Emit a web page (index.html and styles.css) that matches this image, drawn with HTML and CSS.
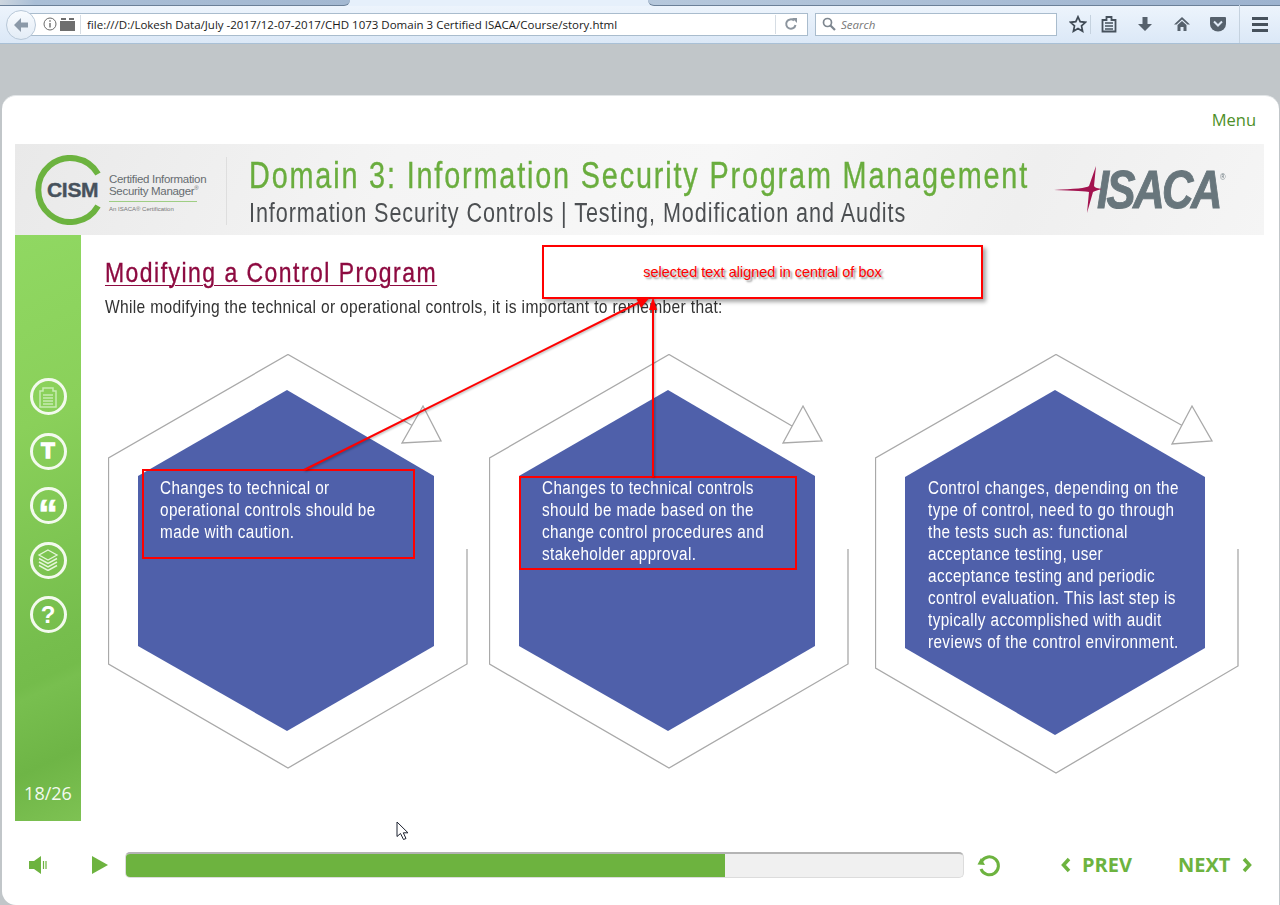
FILE: index.html
```html
<!DOCTYPE html>
<html lang="en">
<head>
<meta charset="utf-8">
<title>Modifying a Control Program</title>
<link rel="stylesheet" href="styles.css">
</head>
<body>
<header class="browser">
  <div class="tabs"><div class="tab tab-left"></div><div class="tab tab-right"></div></div>
  <div class="toolbar">
    <div class="back"><svg width="20" height="20" viewBox="0 0 20 20"><path d="M10 3 3 10l7 7v-4.500h7v-5h-7z" fill="#8b99a8"/></svg></div>
    <div class="urlbar">
      <svg class="u-info" width="14" height="14" viewBox="0 0 14 14"><circle cx="7" cy="7" r="6" fill="none" stroke="#6b6b6b"/><path d="M6.300 6h1.400v4.500H6.300zM6.300 3.300h1.400v1.400H6.300z" fill="#6b6b6b"/></svg>
      <svg class="u-folder" width="15" height="13" viewBox="0 0 15 13"><path d="M0 3h15v10H0zM1 0h5v2H1zM9 0h5v2H9z" fill="#6e6e6e"/></svg>
      <span class="u-sep"></span>
      <span class="url">file:///D:/Lokesh Data/July -2017/12-07-2017/CHD 1073 Domain 3 Certified ISACA/Course/story.html</span>
      <span class="u-sep u-sep-r"></span>
      <svg class="u-reload" width="14" height="14" viewBox="0 0 14 14"><path d="M11.500 8A4.700 4.700 0 1 1 10 3.500" fill="none" stroke="#8c959e" stroke-width="2"/><path d="M8 1h5v5z" fill="#8c959e"/></svg>
    </div>
    <div class="searchbar">
      <svg width="14" height="14" viewBox="0 0 14 14"><circle cx="5.500" cy="5.500" r="4" fill="none" stroke="#7d868f" stroke-width="1.700"/><path d="m8.500 8.500 4.500 4.500" stroke="#7d868f" stroke-width="2.200"/></svg>
      <span>Search</span>
    </div>
    <div class="tools">
      <svg class="i-star" width="18" height="18" viewBox="0 0 18 18"><path d="M9 1.800 11.200 6.700l5.300.6-4 3.600 1.100 5.300L9 13.500l-4.600 2.700 1.100-5.300-4-3.600 5.300-.6z" fill="none" stroke="#3f4a55" stroke-width="1.700"/></svg>
      <span class="t-sep"></span>
      <svg class="i-list" width="16" height="18" viewBox="0 0 16 18"><path d="M1.500 5h4V2h5v3h4v11.500h-13z" fill="none" stroke="#46515c" stroke-width="1.800"/><path d="M4 8h8M4 11h8M4 14h8" stroke="#46515c" stroke-width="1.600"/></svg>
      <svg class="i-down" width="16" height="18" viewBox="0 0 16 18"><path d="M5.500 2h5v7H15l-7 7-7-7h4.500z" fill="#56616c"/></svg>
      <svg class="i-home" width="18" height="18" viewBox="0 0 18 18"><path d="M9 2 1 9.500h2.500L9 4.500l5.500 5H17zM4.500 10 9 6l4.500 4v6h-3v-4h-3v4h-3z" fill="#56616c"/></svg>
      <svg class="i-pocket" width="18" height="18" viewBox="0 0 18 18"><path d="M2 2h14a1 1 0 0 1 1 1v6a8 7.500 0 0 1-16 0V3a1 1 0 0 1 1-1z" fill="#56616c"/><path d="m5 6.500 4 4 4-4" fill="none" stroke="#dfe9f5" stroke-width="2"/></svg>
      <span class="t-sep t-sep-menu"></span>
      <div class="burger"><i></i><i></i><i></i></div>
    </div>
  </div>
</header>

<main class="card">
  <div class="menu-row"><span class="menu-link">Menu</span></div>

  <section class="banner">
    <div class="cism">
      <div class="ring">
        <svg width="70" height="70" viewBox="0 0 70 70"><path d="M65 19A32 32 0 1 0 65 51" fill="none" stroke="#6cb33f" stroke-width="6"/></svg>
        <span>CISM</span>
      </div>
      <div class="cism-text">
        <div class="cism-name">Certified Information<br>Security Manager<sup>®</sup></div>
        <div class="cism-sub">An ISACA® Certification</div>
      </div>
    </div>
    <div class="titles">
      <h1>Domain 3: Information Security Program Management</h1>
      <p>Information Security Controls | Testing, Modification and Audits</p>
    </div>
    <div class="isaca">
      <svg width="48" height="48" viewBox="0 0 48 48"><path d="M0 24C20 23 33 22 35 20L42 0 40 20C41 22 44 22 48 23 44 24 41 25 39 26L33 47 35 26C33 25 20 25 0 24z" fill="#a3134f"/></svg>
      <span class="isaca-word">ISACA<sup>®</sup></span>
    </div>
  </section>

  <section class="body-row">
    <nav class="side">
      <div class="side-icons">
        <div class="ring-btn"><svg width="20" height="22" viewBox="0 0 20 22"><path d="M2 5h3V2h10v3h3v16H2z" fill="none" stroke="#c8ecb2" stroke-width="1.500"/><path d="M5 9h10M5 12h10M5 15h10M5 18h10" stroke="#c8ecb2" stroke-width="1.500"/></svg></div>
        <div class="ring-btn"><span class="glyph-t">T</span></div>
        <div class="ring-btn"><span class="glyph-q">“</span></div>
        <div class="ring-btn"><svg width="22" height="22" viewBox="0 0 22 22"><path d="M11 1 20 6l-9 5-9-5z" fill="none" stroke="#e4f6d9" stroke-width="1.300"/><path d="m2 9.500 9 5 9-5M2 13 11 18l9-5M2 16.500l9 5 9-5" fill="none" stroke="#e4f6d9" stroke-width="1.500"/></svg></div>
        <div class="ring-btn"><span class="glyph-h">?</span></div>
      </div>
      <div class="page-no">18/26</div>
    </nav>

    <article class="slide">
      <h2>Modifying a Control Program</h2>
      <p class="lead">While modifying the technical or operational controls, it is important to remember that:</p>
      <div class="hexes">
        <div class="hex hex-a">
          <svg class="hex-art" width="360" height="420" viewBox="0 0 360 420">
            <path class="outline" d="M359 195V310L180 414 0.500 310V104L180 0.500 305 72"/>
            <path class="tri" d="M315 52 333 87 294 89z"/>
            <path class="solid" d="M179 36 326 122V292L179 377 30 292V122z"/>
          </svg>
          <p>Changes to technical or<br>operational controls should be<br>made with caution.</p>
        </div>
        <div class="hex hex-b">
          <svg class="hex-art" width="360" height="420" viewBox="0 0 360 420">
            <path class="outline" d="M359 195V310L180 414 0.500 310V104L180 0.500 303 72"/>
            <path class="tri" d="M314 52 333 87 294 89z"/>
            <path class="solid" d="M179 36 326 122V292L179 377 30 292V122z"/>
          </svg>
          <p>Changes to technical controls<br>should be made based on the<br>change control procedures and<br>stakeholder approval.</p>
        </div>
        <div class="hex hex-c">
          <svg class="hex-art" width="364" height="420" viewBox="0 0 364 420">
            <path class="outline" d="M363 195V312L181 419 0.500 314V104L181 0.500 308 72"/>
            <path class="tri" d="M317 52 337 87 297 90z"/>
            <path class="solid" d="M180 36 330 123V294L180 381 30 294V123z"/>
          </svg>
          <p>Control changes, depending on the<br>type of control, need to go through<br>the tests such as: functional<br>acceptance testing, user<br>acceptance testing and periodic<br>control evaluation. This last step is<br>typically accomplished with audit<br>reviews of the control environment.</p>
        </div>
      </div>
    </article>
  </section>

  <footer class="controls">
    <svg class="c-sound" width="20" height="20" viewBox="0 0 20 20"><path d="M0 6h5l7-5v18l-7-5H0z" fill="#6db33f"/><path d="M14.500 6v8M17 6v8" stroke="#6db33f" stroke-width="1.200"/></svg>
    <svg class="c-play" width="16" height="18" viewBox="0 0 16 18"><path d="M0 0 16 9 0 18z" fill="#6db33f"/></svg>
    <div class="progress"><div class="progress-fill" style="width:599px"></div></div>
    <svg class="c-replay" width="26" height="26" viewBox="0 0 26 26"><path d="M5.500 9.500A9 9 0 1 1 5 17" fill="none" stroke="#6db33f" stroke-width="3"/><path d="M1.500 12.500 9 13 5 6z" fill="#6db33f"/></svg>
    <div class="nav-btn prev"><svg width="10" height="16" viewBox="0 0 10 16"><path d="M8 2 2.500 8 8 14" fill="none" stroke="#6db33f" stroke-width="3.500"/></svg><span>PREV</span></div>
    <div class="nav-btn next"><span>NEXT</span><svg width="10" height="16" viewBox="0 0 10 16"><path d="M2 2 7.500 8 2 14" fill="none" stroke="#6db33f" stroke-width="3.500"/></svg></div>
  </footer>
</main>

<div class="note note-top">selected text aligned in central of box</div>
<div class="note note-a"></div>
<div class="note note-b"></div>
<svg class="arrows" width="1280" height="905" viewBox="0 0 1280 905">
  <path d="M304 470 640 302M653 477V306" fill="none" stroke="#f00" stroke-width="2"/>
  <path d="M650 297 636 298 641 308zM653 297 649 310H657z" fill="#f00"/>
</svg>
<svg class="cursor" width="16" height="20" viewBox="0 0 16 20"><path d="M1 1V15.500L4.500 12.500 7.500 18.500 10 17.500 7.300 11.800H12z" fill="#fff" stroke="#1d2230" stroke-width="1"/></svg>
</body>
</html>
```
FILE: styles.css
```css
* { box-sizing: border-box; }
html, body { margin: 0; padding: 0; }
body {
  width: 1280px;
  height: 905px;
  overflow: hidden;
  background: #c1c6c9;
  font-family: "Liberation Sans", Arial, sans-serif;
  position: relative;
}

/* browser chrome */
.browser { height: 44px; }
.tabs { height: 6px; display: flex; justify-content: space-between; background: #e6f0fb; }
.tab { height: 6px; background: linear-gradient(90deg, #b6c8dc, #9db3cf); border-bottom: 1px solid #6b8098; }
.tab-left { width: 350px; border-bottom-right-radius: 7px; background: linear-gradient(90deg, #cdd6df 0, #a9bed6 10%, #a3b8d1 100%); }
.tab-right { width: 632px; border-bottom-left-radius: 7px; border-bottom-right-radius: 0; }
.toolbar {
  height: 38px;
  display: flex;
  align-items: center;
  background: linear-gradient(#edf4fc, #dbe8f7);
  border-bottom: 1px solid #a9c0d6;
  position: relative;
  padding-left: 25px;
  padding-bottom: 1px;
}
.back {
  position: absolute;
  left: 6px;
  top: 4px;
  width: 30px;
  height: 30px;
  border-radius: 50%;
  background: linear-gradient(#f8fbfe, #e3ecf6);
  border: 1px solid #b8c8d8;
  display: flex;
  align-items: center;
  justify-content: center;
  z-index: 1;
}
.urlbar {
  width: 783px;
  height: 23px;
  background: #fff;
  border: 1px solid #a9bccd;
  display: flex;
  align-items: center;
  padding-left: 17px;
}
.u-info { margin-right: 3px; }
.u-folder { margin-right: 5px; }
.u-sep { width: 1px; height: 19px; background: #d6dde4; margin-right: 6px; }
.u-sep-r { margin: 0 8px 0 auto; }
.u-reload { margin-right: 9px; }
.url { font: 11.500px "Open Sans", sans-serif; color: #1a1a1a; white-space: nowrap; }
.searchbar {
  width: 242px;
  height: 23px;
  margin-left: 7px;
  background: #fff;
  border: 1px solid #a9bccd;
  display: flex;
  align-items: center;
  gap: 5px;
  padding-left: 6px;
  font: italic 11.500px "Open Sans", sans-serif;
  color: #777;
}
.tools { display: flex; align-items: center; margin-left: 12px; }
.tools svg { margin-right: 20px; }
.tools .i-star { margin-right: 3px; }
.tools .i-list { margin-right: 20px; }
.tools .i-home { margin-right: 18px; }
.t-sep { width: 1px; height: 19px; background: #c5d2df; margin-right: 10px; }
.t-sep-menu { height: 38px; margin: 0 12px 0 -8px; }
.burger { display: flex; flex-direction: column; gap: 3px; }
.burger i { display: block; width: 16px; height: 3px; background: #46515c; }

/* course card */
.card {
  margin: 51px 1px 0 2px;
  height: 810px;
  background: #fff;
  border-radius: 14px 14px 0 14px;
  padding: 0 15px 0 13px;
  border-top: 1px solid #e3e6e8;
}
.menu-row { height: 48px; display: flex; justify-content: flex-end; padding: 13px 8px 0 0; }
.menu-link { font: 16.500px/22px "Open Sans", sans-serif; color: #4d8f28; }

.banner {
  height: 91px;
  display: flex;
  align-items: stretch;
  background: linear-gradient(115deg, #e9e9e9 0, #f4f4f4 30%, #f7f7f7 55%, #efefef 80%, #f5f5f5 100%);
}
.cism { width: 212px; flex: none; display: flex; align-items: center; padding-left: 18px; border-right: 1px solid #dedede; margin: 13px 0 10px; }
.ring {
  width: 71px; height: 70px; flex: none;
  position: relative;
  margin-top: -2px;
}
.ring svg { display: block; }
.ring span {
  position: absolute;
  left: 14px;
  top: 22px;
  font: bold 21px/26px "Liberation Sans", sans-serif;
  color: #47525c;
  letter-spacing: -0.300px;
  -webkit-text-stroke: .4px #47525c;
}
.cism-text { margin-left: 5px; margin-top: 5px; }
.cism-name { font: 11.500px/12px "Liberation Sans", sans-serif; color: #666c70; letter-spacing: -0.300px; white-space: nowrap; border-bottom: 1px solid #9fce84; padding-bottom: 4px; width: 88px; }
.cism-name sup { font-size: 6px; line-height: 0; }
.cism-sub { font: 6px/11px "Liberation Sans", sans-serif; color: #777; margin-top: 2px; }
.titles { width: 802px; flex: none; padding: 11px 0 0 22px; white-space: nowrap; }
.titles h1 {
  margin: 0;
  font: 36px/41px "Liberation Sans", sans-serif;
  color: #6aad3e;
  letter-spacing: 2.300px;
  -webkit-text-stroke: .35px #6aad3e;
  transform: scaleX(.8);
  transform-origin: left top;
}
.titles p {
  margin: 0;
  font: 27px/34px "Liberation Sans", sans-serif;
  color: #4c4f52;
  letter-spacing: 1.150px;
  transform: scaleX(.8);
  transform-origin: left top;
}
.isaca { display: flex; align-items: center; margin-left: 25px; padding-top: 1px; }
.isaca svg { flex: none; margin-right: -5px; position: relative; z-index: 1; }
.isaca-word {
  display: inline-block;
  font: italic bold 53px/50px "Liberation Sans", sans-serif;
  color: #68767c;
  letter-spacing: -3px;
  -webkit-text-stroke: 1px #68767c;
  transform: scaleX(.82);
  transform-origin: left center;
  white-space: nowrap;
}
.isaca-word sup { font-size: 9px; font-weight: normal; line-height: 0; letter-spacing: 0; vertical-align: 28px; -webkit-text-stroke: 0; }

.body-row { display: flex; height: 586px; }
.side {
  width: 66px;
  flex: none;
  background: linear-gradient(155deg, #90d862 0, #8ad05a 32%, #76be4d 68%, #74bc4b 74%, #78bf4f 76%, #6eb546 88%, #7ec253 100%);
  display: flex;
  flex-direction: column;
  align-items: center;
  padding-top: 143px;
}
.side-icons { display: flex; flex-direction: column; gap: 17.500px; }
.ring-btn {
  width: 37px; height: 37px;
  border: 3px solid #f3faee;
  border-radius: 50%;
  display: flex; align-items: center; justify-content: center;
  color: #fff;
}
.glyph-t { font: 900 22px/1 "Liberation Sans", sans-serif; -webkit-text-stroke: 1.500px #fff; }
.glyph-q { font: bold 40px/1 "Liberation Sans", sans-serif; height: 21px; margin-top: -2px; -webkit-text-stroke: .6px #fff; }
.glyph-h { font: bold 24px/1 "Liberation Sans", sans-serif; }
.page-no { margin-top: auto; padding-bottom: 16px; font: 18px/24px "Open Sans", sans-serif; color: #f4faf0; }

.slide { flex: 1; min-width: 0; padding: 22px 0 0 24px; position: relative; }
.slide h2 {
  display: block;
  margin: 0;
  font: 28px/31px "Liberation Sans", sans-serif;
  color: #8d0a40;
  letter-spacing: 1.800px;
  text-decoration: underline;
  text-decoration-thickness: 1px;
  text-underline-offset: 3px;
  -webkit-text-stroke: .35px #8d0a40;
  transform: scaleX(.82);
  transform-origin: left top;
  white-space: nowrap;
}
.lead {
  margin: 7px 0 0;
  font: 19px/24px "Liberation Sans", sans-serif;
  color: #333;
  letter-spacing: .4px;
  transform: scaleX(.82);
  transform-origin: left top;
  white-space: nowrap;
}
.hexes { display: flex; margin: 35px 0 0 3px; }
.hex { position: relative; width: 360px; height: 420px; flex: none; padding-top: 123px; }
.hex-b { margin-left: 21px; }
.hex-c { margin-left: 26px; width: 364px; }
.hex-art { position: absolute; left: 0; top: 0; }
.outline { fill: none; stroke: #a9a9a9; stroke-width: 1.300; }
.tri { fill: #fff; stroke: #a9a9a9; stroke-width: 1.300; }
.solid { fill: #4f60aa; }
.hex p {
  position: relative;
  margin: 0;
  font: 18px/22px "Liberation Sans", sans-serif;
  color: #fff;
  letter-spacing: .45px;
  white-space: nowrap;
  transform: scaleX(.85);
  transform-origin: left top;
}
.hex-a p { margin-left: 52px; }
.hex-b p { margin-left: 53px; }
.hex-c p { margin-left: 53px; }

.controls { display: flex; align-items: center; height: 88px; padding: 0 0 0 14px; }
.c-sound { margin-right: 43px; flex: none; }
.c-play { margin-right: 17px; flex: none; }
.progress {
  width: 839px; height: 26px; flex: none;
  background: #f0f0f0;
  border: 1px solid #dcdcdc;
  border-top: 2px solid #b4b4b4;
  border-radius: 5px;
  overflow: hidden;
}
.progress-fill { height: 100%; background: #6db33f; }
.c-replay { margin-left: 12px; flex: none; }
.nav-btn { display: flex; align-items: center; font: bold 20px/26px "Open Sans", sans-serif; color: #6db33f; }
.prev { margin-left: 59px; gap: 11px; }
.next { margin-left: 46px; gap: 12px; }

/* annotations over the screenshot */
.note { position: absolute; border: 2px solid #f00; }
.note-top {
  left: 542px; top: 245px; width: 441px; height: 54px;
  background: #fff;
  box-shadow: 3px 3px 4px rgba(0, 0, 0, .35);
  display: flex; align-items: center; justify-content: center;
  font: 14.500px "Liberation Sans", sans-serif;
  color: #f00;
  text-shadow: 2px 2px 2px rgba(0, 0, 0, .45);
}
.note-a { left: 142px; top: 469px; width: 273px; height: 90px; }
.note-b { left: 519px; top: 476px; width: 278px; height: 94px; }
.arrows { position: absolute; left: 0; top: 0; pointer-events: none; filter: drop-shadow(1px 1px 1px rgba(0, 0, 0, .3)); }
.cursor { position: absolute; left: 396px; top: 821px; }
```
